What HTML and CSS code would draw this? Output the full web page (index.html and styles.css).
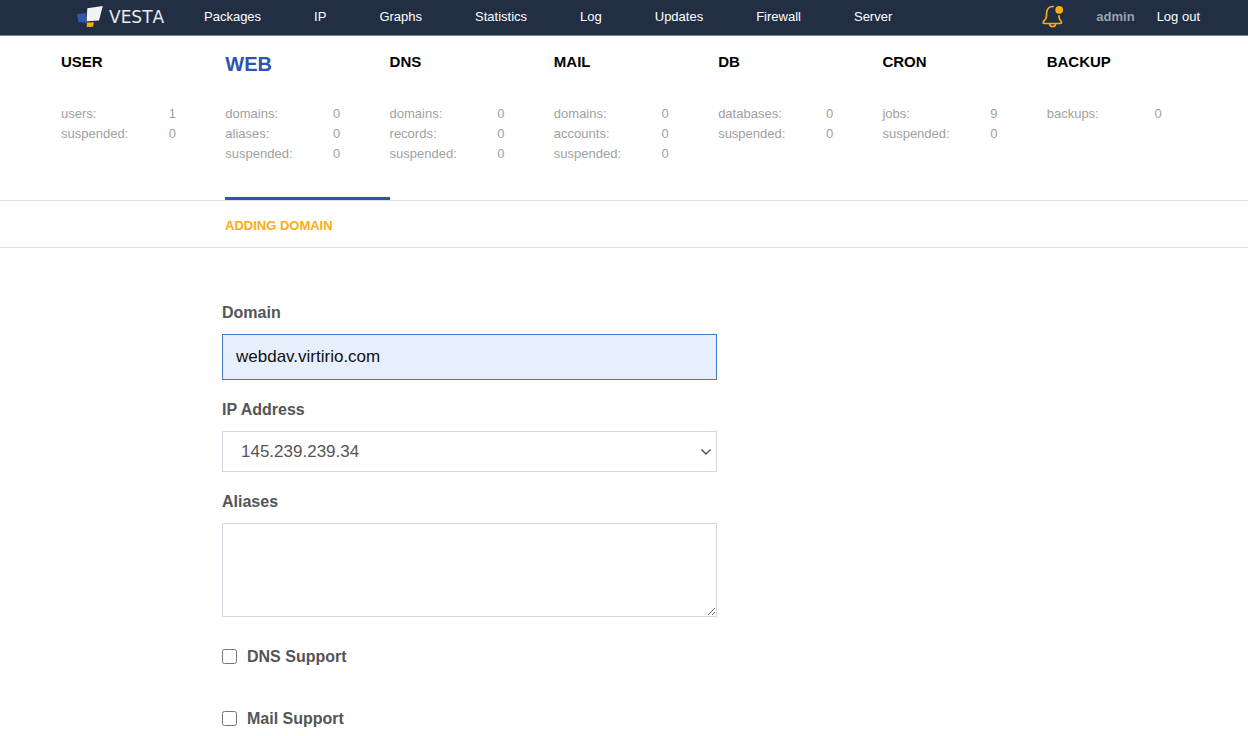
FILE: index.html
```html
<!DOCTYPE html>
<html lang="en">
<head>
<meta charset="utf-8">
<title>Vesta - Adding Domain</title>
<link rel="stylesheet" href="styles.css">
</head>
<body>
<header class="topbar">
  <a class="logo" href="#">
    <svg class="logo-mark" width="27" height="22" viewBox="0 0 27 22" aria-hidden="true">
      <path fill="#2f56b0" d="M0 8.2 9.2 6.7v10.1L1.3 16z"/>
      <path fill="#f1f2f4" d="M10.3 2.2 25.8 0 22 14.4l-12.4.8z"/>
      <path fill="#ffab08" d="M9.8 16.6l7-.4-.8 4.5-6.2.4z"/>
    </svg>
    <span class="logo-name">VESTA</span>
  </a>
  <nav class="menu">
    <a href="#">Packages</a>
    <a href="#">IP</a>
    <a href="#">Graphs</a>
    <a href="#">Statistics</a>
    <a href="#">Log</a>
    <a href="#">Updates</a>
    <a href="#">Firewall</a>
    <a href="#">Server</a>
  </nav>
  <div class="account">
    <button class="bell" type="button" aria-label="Notifications">
      <svg width="22" height="23" viewBox="0 0 22 23" fill="none" stroke="#fbac12" stroke-width="1.7" stroke-linecap="round" stroke-linejoin="round" aria-hidden="true">
        <path d="M11.2 1.5C6.8 1.2 4.8 4.3 4.6 8l-.2 3.8c-.1 2.2-1.4 3-2.7 4.4-1 1.2-.6 2.3.8 2.3h15.6c1.4 0 1.8-1.1.8-2.3-1.3-1.4-1.9-2.4-1.9-4.4v-1"/>
        <path d="M7.6 18.8c.2 3.8 5.8 3.8 6 0"/>
        <circle cx="17.2" cy="4.8" r="3.9" fill="#fbac12" stroke="none"/>
      </svg>
    </button>
    <a class="account-name" href="#">admin</a>
    <a class="logout" href="#">Log out</a>
  </div>
</header>

<nav class="stats">
  <a class="stat" href="#">
    <span class="stat-title">USER</span>
    <span class="stat-row"><span>users:</span><span>1</span></span>
    <span class="stat-row"><span>suspended:</span><span>0</span></span>
  </a>
  <a class="stat stat-active" href="#">
    <span class="stat-title">WEB</span>
    <span class="stat-row"><span>domains:</span><span>0</span></span>
    <span class="stat-row"><span>aliases:</span><span>0</span></span>
    <span class="stat-row"><span>suspended:</span><span>0</span></span>
  </a>
  <a class="stat" href="#">
    <span class="stat-title">DNS</span>
    <span class="stat-row"><span>domains:</span><span>0</span></span>
    <span class="stat-row"><span>records:</span><span>0</span></span>
    <span class="stat-row"><span>suspended:</span><span>0</span></span>
  </a>
  <a class="stat" href="#">
    <span class="stat-title">MAIL</span>
    <span class="stat-row"><span>domains:</span><span>0</span></span>
    <span class="stat-row"><span>accounts:</span><span>0</span></span>
    <span class="stat-row"><span>suspended:</span><span>0</span></span>
  </a>
  <a class="stat" href="#">
    <span class="stat-title">DB</span>
    <span class="stat-row"><span>databases:</span><span>0</span></span>
    <span class="stat-row"><span>suspended:</span><span>0</span></span>
  </a>
  <a class="stat" href="#">
    <span class="stat-title">CRON</span>
    <span class="stat-row"><span>jobs:</span><span>9</span></span>
    <span class="stat-row"><span>suspended:</span><span>0</span></span>
  </a>
  <a class="stat" href="#">
    <span class="stat-title">BACKUP</span>
    <span class="stat-row"><span>backups:</span><span>0</span></span>
  </a>
</nav>

<h1 class="page-title">ADDING DOMAIN</h1>

<form class="form">
  <label class="label" for="domain">Domain</label>
  <input class="field field-filled" id="domain" type="text" value="webdav.virtirio.com">
  <label class="label" for="ip">IP Address</label>
  <span class="select-wrap">
    <select class="field field-select" id="ip">
      <option>145.239.239.34</option>
    </select>
    <svg class="chevron" width="10" height="6" viewBox="0 0 10 6" fill="none" stroke="#4a4d52" stroke-width="1.4" aria-hidden="true"><path d="M.5.5 5 5 9.5.5"/></svg>
  </span>
  <label class="label" for="aliases">Aliases</label>
  <textarea class="field field-area" id="aliases"></textarea>
  <label class="check" for="dns"><input class="box" id="dns" type="checkbox">DNS Support</label>
  <label class="check" for="mail"><input class="box" id="mail" type="checkbox">Mail Support</label>
</form>
</body>
</html>
```

FILE: styles.css
```css
* {
  box-sizing: border-box;
}

body {
  margin: 0;
  background: #fff;
  font-family: "Liberation Sans", Arial, sans-serif;
  font-size: 13px;
}

a {
  color: inherit;
  text-decoration: none;
}

.topbar {
  display: flex;
  align-items: center;
  height: 36px;
  padding: 0 48px 2px 77px;
  border-bottom: 1px solid #7b8390;
  background: #222e44;
  color: #fff;
}

.logo {
  display: flex;
  align-items: center;
  gap: 5px;
  width: 127px;
}

.logo-name {
  color: #e9ebee;
  font-family: "DejaVu Sans", sans-serif;
  font-size: 17px;
  font-kerning: none;
  line-height: 20px;
}

.menu {
  display: flex;
  gap: 53px;
}

.account {
  display: flex;
  align-items: center;
  gap: 22px;
  margin-left: auto;
}

.bell {
  display: flex;
  margin-right: 10px;
  padding: 0;
  border: 0;
  background: none;
}

.account-name {
  color: #9da2aa;
  font-weight: bold;
}

.stats {
  display: grid;
  grid-template-columns: repeat(7, 1fr);
  padding: 0 37px 0 61px;
  border-bottom: 1px solid #e0e1e2;
}

.stat {
  display: flex;
  flex-direction: column;
  padding: 16px 0 33px;
  border-bottom: 3px solid transparent;
  color: #9f9f9f;
}

.stat-title {
  height: 52px;
  color: #000;
  font-size: 15px;
  font-weight: bold;
  line-height: 20px;
}

.stat-row {
  display: flex;
  justify-content: space-between;
  width: 115px;
  line-height: 20px;
}

.stat-active {
  border-bottom-color: #2d55b0;
}

.stat-active .stat-title {
  color: #2d55b0;
  font-size: 20px;
  line-height: 24px;
}

.page-title {
  margin: 0;
  padding: 15px 0 11px 225px;
  border-bottom: 1px solid #e0e1e2;
  color: #fcab14;
  font-size: 13px;
  line-height: 20px;
}

.form {
  display: flex;
  flex-direction: column;
  max-width: 717px;
  padding: 55px 0 0 222px;
}

.label {
  margin-bottom: 11px;
  color: #555;
  font-size: 16px;
  font-weight: bold;
  line-height: 20px;
}

.field {
  display: block;
  width: 100%;
  margin: 0 0 20px;
  border: 1px solid #d2d7dd;
  border-radius: 0;
  outline: 0;
  background: #fff;
  color: #555;
  font-family: inherit;
  font-size: 17px;
}

.field-filled {
  height: 46px;
  padding: 0 13px;
  border-color: #4477c2;
  background: #e7effd;
  color: #111;
}

.select-wrap {
  position: relative;
}

.field-select {
  height: 41px;
  padding: 0 18px;
  appearance: none;
}

.chevron {
  position: absolute;
  top: 18px;
  right: 6px;
  pointer-events: none;
}

.field-area {
  height: 94px;
  margin-bottom: 29px;
  padding: 10px 13px;
  resize: vertical;
}

.check {
  display: flex;
  align-items: center;
  gap: 10px;
  margin-bottom: 41px;
  color: #555;
  font-size: 16px;
  font-weight: bold;
  line-height: 21px;
}

.check:last-child {
  margin-bottom: 0;
}

.box {
  width: 15px;
  height: 15px;
  margin: 0;
}
```
